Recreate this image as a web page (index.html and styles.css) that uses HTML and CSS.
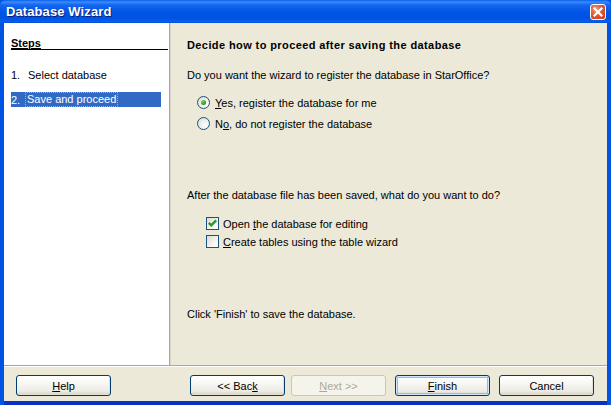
FILE: index.html
```html
<!DOCTYPE html>
<html>
<head>
<meta charset="utf-8">
<link rel="stylesheet" href="styles.css">
</head>
<body>
<div class="window">
  <div class="titlebar">
    <span class="title">Database Wizard</span>
    <span class="close"><svg width="16" height="16" viewBox="0 0 16 16"><path d="M4.5 4.5 L11.5 11.5 M11.5 4.5 L4.5 11.5" stroke="#fff" stroke-width="2.2" stroke-linecap="square"/></svg></span>
  </div>
  <div class="client">
    <div class="main">
      <div class="steps">
        <div class="steps-title">Steps</div>
        <div class="step"><span class="num">1.</span><span class="lbl">Select database</span></div>
        <div class="step active"><span class="num">2.</span><span class="lbl focus">Save and proceed</span></div>
      </div>
      <div class="page">
        <div class="heading">Decide how to proceed after saving the database</div>
        <div class="q q1">Do you want the wizard to register the database in StarOffice?</div>
        <div class="radio r1"><span class="rb checked"></span><span><u>Y</u>es, register the database for me</span></div>
        <div class="radio r2"><span class="rb"></span><span>N<u>o</u>, do not register the database</span></div>
        <div class="q q2">After the database file has been saved, what do you want to do?</div>
        <div class="check c1"><span class="cb checked"><svg width="11" height="11" viewBox="0 0 11 11"><path d="M1.8 4.8 L4.3 7.4 L9.2 2.4" fill="none" stroke="#21A121" stroke-width="2.4"/></svg></span><span>Open <u>t</u>he database for editing</span></div>
        <div class="check c2"><span class="cb"></span><span><u>C</u>reate tables using the table wizard</span></div>
        <div class="q q3">Click 'Finish' to save the database.</div>
      </div>
    </div>
    <div class="buttons">
      <button class="btn help"><u>H</u>elp</button>
      <div class="spacer"></div>
      <button class="btn back">&lt;&lt; Bac<u>k</u></button>
      <button class="btn next disabled"><u>N</u>ext &gt;&gt;</button>
      <button class="btn finish default"><u>F</u>inish</button>
      <button class="btn cancel">Cancel</button>
    </div>
  </div>
</div>
</body>
</html>
```
FILE: styles.css
```css
html, body {
  margin: 0;
  padding: 0;
  background: #fff;
}
.window {
  width: 611px;
  height: 405px;
  box-sizing: border-box;
  display: flex;
  flex-direction: column;
  background: #0054E3;
  font-family: "Liberation Sans", Arial, sans-serif;
  font-size: 11px;
  color: #000;
}
.titlebar {
  height: 23px;
  flex: none;
  display: flex;
  align-items: center;
  justify-content: space-between;
  padding: 0 6px 0 6px;
  background: linear-gradient(to bottom, #0A5FF0 0, #3A8CFA 2px, #1565EE 5px, #0055E6 12px, #0052E0 18px, #0A5FF0 22px, #0046C8 23px);
  border-radius: 6px 6px 0 0;
}
.title {
  color: #fff;
  font-weight: bold;
  font-size: 13px;
  text-shadow: 1px 1px 0 #0A1E7A;
  letter-spacing: 0.1px;
}
.close {
  width: 16px;
  height: 16px;
  box-sizing: border-box;
  border: 1px solid #fff;
  border-radius: 3px;
  background: radial-gradient(circle at 35% 30%, #F29A7E 0, #E2582F 45%, #C43A1A 100%);
  display: flex;
  margin-right: -1px;
}
.close svg {
  margin: -1px;
}
.client {
  flex: 1;
  margin: 0 4px 4px 4px;
  background: #ECE9D8;
  display: flex;
  flex-direction: column;
  box-shadow: 0 4px 0 0 #0831C8;
}
.main {
  flex: 1;
  display: flex;
  border-bottom: 1px solid #ACA899;
}
.steps {
  flex: none;
  background: #fff;
  border-right: 1px solid #A7A6AA;
  padding-left: 7px;
  box-sizing: border-box;
  width: 166px;
}
.steps-title {
  margin-top: 15px;
  line-height: 11px;
  font-weight: bold;
  text-decoration: underline;
  border-bottom: 1px solid #000;
  margin-right: 1px;
}
.step {
  display: flex;
  align-items: center;
  height: 15px;
  margin-right: 8px;
  margin-top: 17px;
}
.step + .step {
  margin-top: 10px;
}
.step .num {
  width: 17px;
}
.step.active {
  background: #316AC5;
  color: #fff;
}
.focus {
  outline: 1px dotted #E8A848;
  outline-offset: 0;
  padding: 0 1px;
  margin-left: -2px;
  line-height: 13px;
}
.page {
  flex: 1;
  padding-left: 16px;
  border-left: 1px solid #D8D4C6;
}
.heading {
  margin-top: 15px;
  line-height: 14px;
  font-weight: bold;
  letter-spacing: 0.4px;
}
.q {
  line-height: 14px;
}
.q1 {
  margin-top: 16px;
}
.radio, .check {
  display: flex;
  align-items: center;
  height: 15px;
}
.radio {
  padding-left: 10px;
}
.r1 {
  margin-top: 13px;
}
.r2 {
  margin-top: 6px;
}
.rb {
  width: 13px;
  height: 13px;
  box-sizing: border-box;
  border-radius: 50%;
  border: 1px solid #1C5180;
  background: radial-gradient(circle at 70% 70%, #fff 0, #f4f3ee 35%, #d9d7ca 100%);
  margin-right: 5px;
  display: flex;
  align-items: center;
  justify-content: center;
}
.rb.checked::after {
  content: "";
  width: 5px;
  height: 5px;
  border-radius: 50%;
  background: radial-gradient(circle at 35% 35%, #6FDB6F 0, #21A121 60%, #178317 100%);
}
.q2 {
  margin-top: 57px;
}
.check {
  padding-left: 19px;
}
.c1 {
  margin-top: 14px;
}
.c2 {
  margin-top: 3px;
}
.cb {
  width: 13px;
  height: 13px;
  box-sizing: border-box;
  border: 1px solid #1C5180;
  background: linear-gradient(135deg, #DCDBD5 0, #F4F4F0 60%, #fff 100%);
  margin-right: 4px;
  display: flex;
}
.q3 {
  margin-top: 58px;
}
.buttons {
  height: 35px;
  flex: none;
  display: flex;
  align-items: flex-start;
  padding: 8px 0 0 12px;
  box-sizing: border-box;
  border-top: 1px solid #fff;
}
.spacer {
  flex: none;
  width: 73px;
}
.btn {
  flex: none;
  width: 95px;
  height: 21px;
  box-sizing: border-box;
  margin: 0;
  padding: 0;
  font-family: "Liberation Sans", Arial, sans-serif;
  font-size: 11px;
  color: #000;
  border: 1px solid #003C74;
  border-radius: 3px;
  background: linear-gradient(to bottom, #FFFFFF 0, #F7F7F3 40%, #ECEBE4 80%, #D6D0C5 100%);
  box-shadow: inset -1px -1px 0 #E3E0D3;
}
.btn.back {
  margin-left: 6px;
}
.btn.next {
  margin-left: 6px;
}
.btn.finish {
  margin-left: 9px;
}
.btn.cancel {
  margin-left: 9px;
}
.btn.disabled {
  border-color: #C9C7BA;
  color: #ACA899;
  background: #F5F4EA;
  box-shadow: none;
}
.btn.default {
  box-shadow: inset 0 0 0 1px #CEE7FF, inset 0 0 0 2px #98B8EA;
}
```
